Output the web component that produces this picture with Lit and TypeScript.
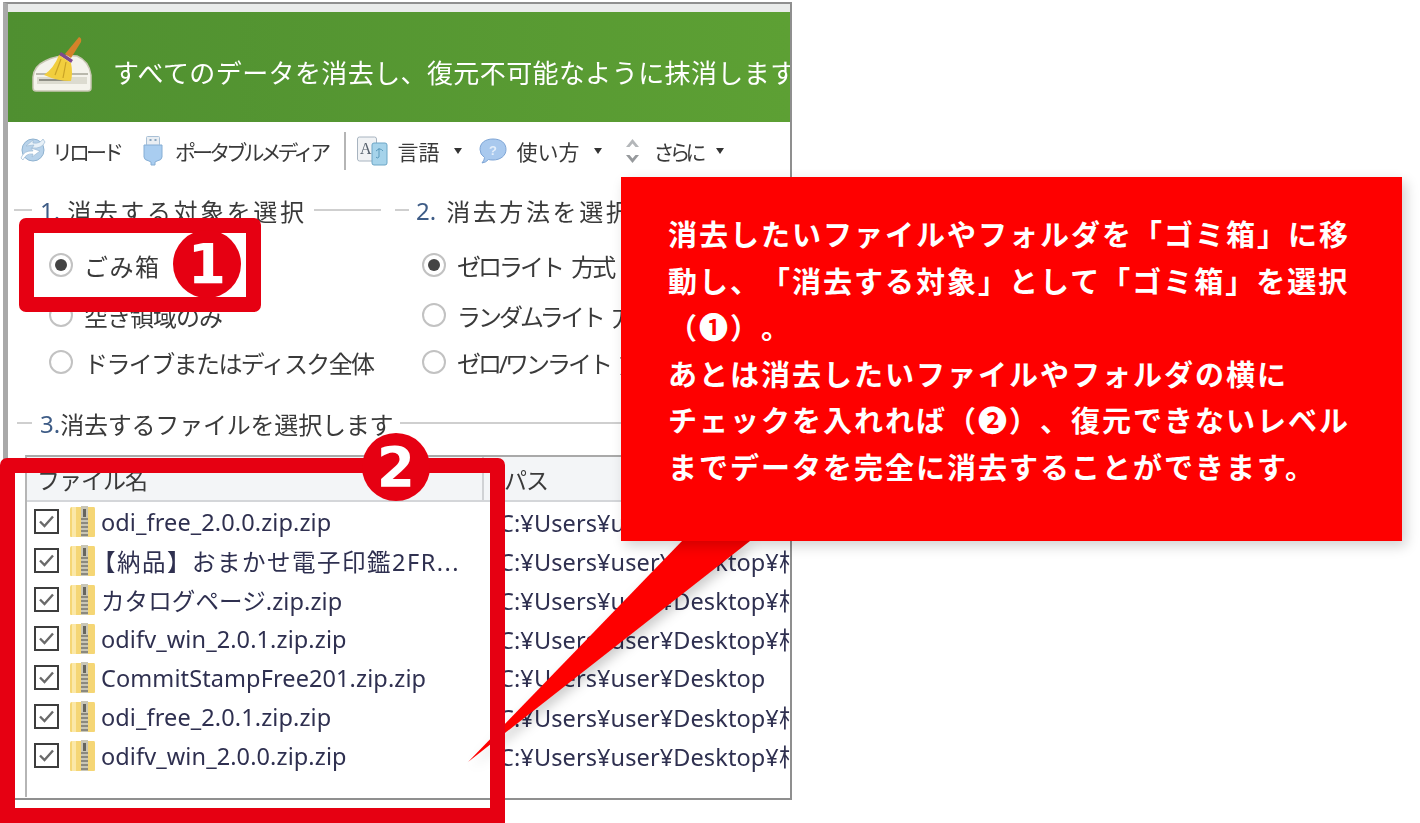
import { LitElement, html, css, svg } from 'lit';
import { customElement } from 'lit/decorators.js';

const FILES = [
  ['odi_free_2.0.0.zip.zip', 'C:¥Users¥user¥Desktop¥相'],
  ['【納品】おまかせ電子印鑑2FR...', 'C:¥Users¥user¥Desktop¥相'],
  ['カタログページ.zip.zip', 'C:¥Users¥user¥Desktop¥相'],
  ['odifv_win_2.0.1.zip.zip', 'C:¥Users¥user¥Desktop¥相'],
  ['CommitStampFree201.zip.zip', 'C:¥Users¥user¥Desktop'],
  ['odi_free_2.0.1.zip.zip', 'C:¥Users¥user¥Desktop¥相'],
  ['odifv_win_2.0.0.zip.zip', 'C:¥Users¥user¥Desktop¥相'],
];

const broom = html`<svg class="broom" width="64" height="60" viewBox="0 0 64 60">
  <path d="M2 42 Q3 31 14 26 Q28 19 46 21 Q58 26 60 40 L60 53 Q60 56 57 56 L5 56 Q2 56 2 53 Z" fill="#f4f3ec" stroke="#c9c7b4" stroke-width="1.5"/>
  <rect x="5" y="38" width="52" height="2" fill="#b9b8ac"/>
  <rect x="6" y="42" width="50" height="7" fill="#dcdbd0"/>
  <rect x="8" y="44" width="32" height="2" fill="#8f8f86"/>
  <path d="M48 2 Q51 3 50 7 L40 23 L34 19 Z" fill="#d5822a"/>
  <path d="M30 17 L42 25 L40 28 L28 20 Z" fill="#7f4a8e"/>
  <path d="M28 20 L40 28 Q42 38 40 46 Q26 46 13 40 Q23 33 28 20 Z" fill="#f1ce3e"/>
  <path d="M30 24 L24 40 M35 27 L32 43" stroke="#c9a326" stroke-width="1.2" fill="none"/>
</svg>`;

const reloadIcon = html`<svg width="28" height="28" viewBox="0 0 28 28">
  <circle cx="15" cy="13" r="11" fill="#b7d2ea" stroke="#8fb2d0"/>
  <path d="M3 21 Q6 13 15 14 L13 11 L22 14 L14 20 L15 17 Q8 16 5 23 Z" fill="#fff" stroke="#9dbad4" stroke-width=".7"/>
  <path d="M27 5 Q24 12 14 11 L16 8 L8 9 L15 3 L15 6 Q22 7 25 2 Z" fill="#e8f1f8" stroke="#9dbad4" stroke-width=".7"/>
</svg>`;

const usbIcon = html`<svg width="20" height="30" viewBox="0 0 20 30">
  <rect x="3.5" y="0.5" width="13" height="9" rx="1" fill="#e9eef3" stroke="#a9c0d6"/>
  <rect x="6.5" y="3" width="2" height="2" fill="#89a5bf"/><rect x="11.5" y="3" width="2" height="2" fill="#89a5bf"/>
  <path d="M1 9 H19 V21 Q19 24 14 25 L12 26 V29 H8 V26 L6 25 Q1 24 1 21 Z" fill="#a9cdf0" stroke="#86aed4"/>
</svg>`;

const langIcon = html`<svg width="31" height="30" viewBox="0 0 31 30">
  <rect x="0.5" y="1" width="19" height="24" rx="2" fill="#f1f3f5" stroke="#a8b4c0"/>
  <text x="3" y="18" font-family="Liberation Serif, serif" font-size="16" fill="#56616d">A</text>
  <rect x="15" y="7" width="15" height="22" rx="2" fill="#a6d3ea" stroke="#6ca6c6"/>
  <path d="M19 15 q4 -4 7 0 M22 12 v9 q-2 2 -3 0" stroke="#5b9abc" fill="none"/>
</svg>`;

const helpIcon = html`<svg width="28" height="26" viewBox="0 0 28 26">
  <path d="M14 1 C22 1 27 5 27 11.5 C27 18 21 22 14 22 Q11 22 9.5 21.5 Q7 24.5 3 25 Q5.5 22 5.5 19.5 Q1 16.5 1 11.5 C1 5 6 1 14 1 Z" fill="#a9c9ee" stroke="#7ea5d6"/>
  <text x="14" y="17" text-anchor="middle" font-family="Liberation Sans, sans-serif" font-weight="700" font-size="13" fill="#e4eefa">?</text>
</svg>`;

const moreIcon = html`<svg width="15" height="28" viewBox="0 0 15 28">
  <path d="M1 10 L7.5 2 L14 10 L10.5 10 L7.5 6.5 L4.5 10 Z" fill="#b4b7ba"/>
  <path d="M1 18 L7.5 26 L14 18 L10.5 18 L7.5 21.5 L4.5 18 Z" fill="#96999c"/>
</svg>`;

const caret = html`<span class="caret"></span>`;

const zipIcon = html`<svg class="zip" width="25" height="31" viewBox="0 0 25 31">
  <path d="M0 3 Q0 1 2 1 H24 Q25 1 25 3 V30 Q25 31 24 31 H1 Q0 31 0 30 Z" fill="#f5d675"/>
  <rect x="2" y="1" width="4" height="30" fill="#fbe8a8"/>
  <rect x="11" y="0" width="7" height="31" fill="#c9c6b6"/>
  <path d="M11 13 h7 M11 17 h7 M11 21 h7 M11 25 h7 M11 29 h7" stroke="#77766c" stroke-width="1.3"/>
  <rect x="13" y="3" width="3" height="8" fill="#66655e"/>
</svg>`;

const checkbox = html`<svg class="check" width="25" height="25" viewBox="0 0 25 25">
  <rect x="1" y="1" width="23" height="23" fill="#fff" stroke="#3d3d3d" stroke-width="2"/>
  <path d="M6 12.5 L10.5 17 L19 7.5" fill="none" stroke="#6a6a6a" stroke-width="2.4"/>
</svg>`;

const tail = svg`<polygon points="214,0 282,0 0,221" fill="#fe0000"/>`;

@customElement('app-root')
export class AppRoot extends LitElement {
  static styles = css`
    :host {
      display: block;
      position: relative;
      width: 1420px;
      height: 823px;
      overflow: hidden;
      background: #fff;
      font-family: "Noto Sans", "Noto Sans CJK JP", sans-serif;
      color: #3a3a3a;
      text-spacing-trim: space-all;
    }
    .window {
      box-sizing: border-box;
      width: 789px;
      height: 798px;
      margin: 2px 0 0 3px;
      border: 2px solid #8f8f8f;
      border-left: 5px solid #a9a9a9;
      overflow: hidden;
      background: #fff;
      filter: blur(0.35px);
    }
    .titlebar {
      height: 8px;
      background: #e9ebea;
    }
    .banner {
      height: 110px;
      display: flex;
      align-items: center;
      background: linear-gradient(90deg, #4f8f30, #5da034);
      color: #fff;
      font-size: 26px;
      letter-spacing: 0.4px;
      white-space: nowrap;
      overflow: hidden;
    }
    .broom {
      margin: 0 18px 0 23px;
      flex: none;
      position: relative;
      top: -2px;
    }
    .banner span {
      position: relative;
      top: 5px;
    }
    .toolbar {
      height: 58px;
      display: flex;
      align-items: center;
      font-size: 21px;
      white-space: nowrap;
    }
    .tool {
      display: flex;
      align-items: center;
    }
    .tool svg { flex: none; }
    .t-reload { margin-left: 10px; letter-spacing: -4px; }
    .t-reload span { margin-left: 6px; }
    .t-usb { margin-left: 23px; letter-spacing: -3.9px; }
    .t-usb span { margin-left: 12px; }
    .sep {
      width: 2px;
      height: 38px;
      background: #b5b5b5;
      margin-left: 17px;
    }
    .t-lang { margin-left: 11px; }
    .t-lang span { margin-left: 9px; }
    .t-help { margin-left: 17px; }
    .t-help span { margin-left: 9px; }
    .t-more { margin-left: 23px; letter-spacing: -5px; }
    .t-more span { margin-left: 13px; }
    .tool .caret {
      width: 0;
      height: 0;
      border: 4.5px solid transparent;
      border-top: 6px solid #333;
      border-bottom: 0;
      margin-left: 15px;
      flex: none;
    }
    .groups {
      display: flex;
      height: 224px;
      padding-left: 6px;
      font-size: 24px;
    }
    .group { flex: none; }
    .group-a { width: 367px; margin-right: 14px; }
    .group-b { width: 400px; }
    .legend {
      height: 60px;
      display: flex;
      align-items: center;
      white-space: nowrap;
      letter-spacing: 2.6px;
      box-sizing: border-box;
    }
    .legend .line {
      height: 1.5px;
      background: #cfcfcf;
      flex: none;
    }
    .legend .lead { width: 18px; margin-right: 8px; }
    .legend b { font-weight: 400; color: #3e5c86; margin-right: 7px; letter-spacing: 0; }
    .legend .fill { flex: 1; margin-left: 7px; }
    .group-b .legend .lead { width: 14px; margin-right: 7px; }
    .group-b .legend b { margin-right: 10px; }
    .radios {
      display: grid;
      grid-template-rows: 50px 50px 44px;
      padding-left: 35px;
      height: 144px;
    }
    .group-b .radios { padding-left: 27px; }
    .radio {
      display: flex;
      align-items: center;
      white-space: nowrap;
      font-size: 24px;
    }
    .dot {
      box-sizing: border-box;
      width: 24px;
      height: 24px;
      border-radius: 50%;
      border: 2px solid #c2c2c2;
      background: #fff;
      margin-right: 11px;
      flex: none;
      display: flex;
      align-items: center;
      justify-content: center;
    }
    .dot.on::after {
      content: "";
      width: 12px;
      height: 12px;
      border-radius: 50%;
      background: #444;
    }
    .sp-1 { letter-spacing: 1.5px; }
    .sp-2 { letter-spacing: -1.6px; }
    .sp-3 { letter-spacing: -1px; }
    .sp-4 { letter-spacing: -3px; word-spacing: 6px; }
    .section {
      padding-left: 9px;
      font-size: 24px;
    }
    .section .legend {
      height: 38px;
      letter-spacing: -0.2px;
    }
    .section .legend .lead { width: 15px; margin-right: 8px; }
    .section .legend b { margin-right: 0; }
    .table {
      margin: 13px 0 0 17px;
      height: 342px;
      box-sizing: border-box;
      border-top: 2px solid #a9a9a9;
      border-left: 2px solid #b5b5b5;
      overflow: hidden;
    }
    .thead {
      display: grid;
      grid-template-columns: 455px 1fr;
      height: 45px;
      background: #f3f5f7;
      border-bottom: 2px solid #d4d6d9;
      box-sizing: border-box;
      align-items: center;
      font-size: 23px;
    }
    .thead div { padding-left: 10px; letter-spacing: -1px; white-space: nowrap; }
    .thead div + div { border-left: 2px solid #d0d2d5; height: 100%; display: flex; align-items: center; padding-left: 20px; }
    .row {
      display: grid;
      grid-template-columns: 472px 1fr;
      height: 39px;
      align-items: center;
      white-space: nowrap;
      color: #2f3050;
      font-size: 23.5px;
      letter-spacing: 0.1px;
    }
    .cell-name {
      display: flex;
      align-items: center;
      padding-left: 7px;
      overflow: hidden;
    }
    .check { flex: none; margin-right: 11px; }
    .zip { flex: none; margin-right: 6px; }
    .bracket { margin-left: -9px; letter-spacing: 1.5px; }
    .path { overflow: hidden; }
    .callout {
      position: absolute;
      left: 621px;
      top: 177px;
      width: 781px;
      height: 364px;
      box-sizing: border-box;
      padding: 35px 0 0 47px;
      background: #fe0000;
      box-shadow: 4px 5px 12px rgba(0, 0, 0, 0.18);
      color: #fff;
      font-size: 29px;
      font-weight: 700;
      line-height: 46.5px;
      letter-spacing: 2px;
      white-space: nowrap;
    }
    .tail {
      position: absolute;
      left: 468px;
      top: 541px;
      filter: drop-shadow(4px 5px 6px rgba(0, 0, 0, 0.2));
    }
    .frame {
      position: absolute;
      box-sizing: border-box;
      border: 15px solid #e60012;
      border-radius: 7px;
    }
    .frame-1 { left: 19px; top: 218px; width: 242px; height: 94px; }
    .frame-2 { left: 0; top: 458px; width: 505px; height: 365px; border-radius: 7px 7px 0 0; }
    .badge {
      position: absolute;
      width: 68px;
      height: 68px;
      border-radius: 50%;
      background: #e60012;
      color: #fff;
      font-family: "DejaVu Sans", sans-serif;
      font-weight: 700;
      font-size: 55px;
      line-height: 68px;
      text-align: center;
    }
    .badge-1 { left: 173px; top: 230px; }
    .badge-2 { left: 362px; top: 433px; }
  `;

  render() {
    return html`
      <div class="window">
        <div class="titlebar"></div>
        <div class="banner">${broom}<span>すべてのデータを消去し、復元不可能なように抹消します。</span></div>
        <div class="toolbar">
          <div class="tool t-reload">${reloadIcon}<span>リロード</span></div>
          <div class="tool t-usb">${usbIcon}<span>ポータブルメディア</span></div>
          <div class="sep"></div>
          <div class="tool t-lang">${langIcon}<span>言語</span>${caret}</div>
          <div class="tool t-help">${helpIcon}<span>使い方</span>${caret}</div>
          <div class="tool t-more">${moreIcon}<span>さらに</span>${caret}</div>
        </div>
        <div class="groups">
          <div class="group group-a">
            <div class="legend"><i class="line lead"></i><b>1.</b>消去する対象を選択<i class="line fill"></i></div>
            <div class="radios">
              <div class="radio sp-1"><i class="dot on"></i>ごみ箱</div>
              <div class="radio sp-3"><i class="dot"></i>空き領域のみ</div>
              <div class="radio sp-2"><i class="dot"></i>ドライブまたはディスク全体</div>
            </div>
          </div>
          <div class="group group-b">
            <div class="legend"><i class="line lead"></i><b>2.</b>消去方法を選択<i class="line fill"></i></div>
            <div class="radios">
              <div class="radio sp-4"><i class="dot on"></i>ゼロライト 方式</div>
              <div class="radio sp-4"><i class="dot"></i>ランダムライト 方式</div>
              <div class="radio sp-4"><i class="dot"></i>ゼロ/ワンライト 方式</div>
            </div>
          </div>
        </div>
        <div class="section">
          <div class="legend"><i class="line lead"></i><b>3.</b>消去するファイルを選択します<i class="line fill"></i></div>
        </div>
        <div class="table">
          <div class="thead"><div>ファイル名</div><div>パス</div></div>
          ${FILES.map(([name, path]) => html`
            <div class="row">
              <div class="cell-name">${checkbox}${zipIcon}<span class=${name.startsWith('【') ? 'bracket' : ''}>${name}</span></div>
              <div class="path">${path}</div>
            </div>`)}
        </div>
      </div>

      <svg class="tail" width="282" height="221" viewBox="0 0 282 221">${tail}</svg>
      <div class="callout">
        消去したいファイルやフォルダを「ゴミ箱」に移<br>
        動し、「消去する対象」として「ゴミ箱」を選択<br>
        （❶）。<br>
        あとは消去したいファイルやフォルダの横に<br>
        チェックを入れれば（❷）、復元できないレベル<br>
        までデータを完全に消去することができます。
      </div>

      <div class="frame frame-1"></div>
      <div class="frame frame-2"></div>
      <div class="badge badge-1">1</div>
      <div class="badge badge-2">2</div>
    `;
  }
}
